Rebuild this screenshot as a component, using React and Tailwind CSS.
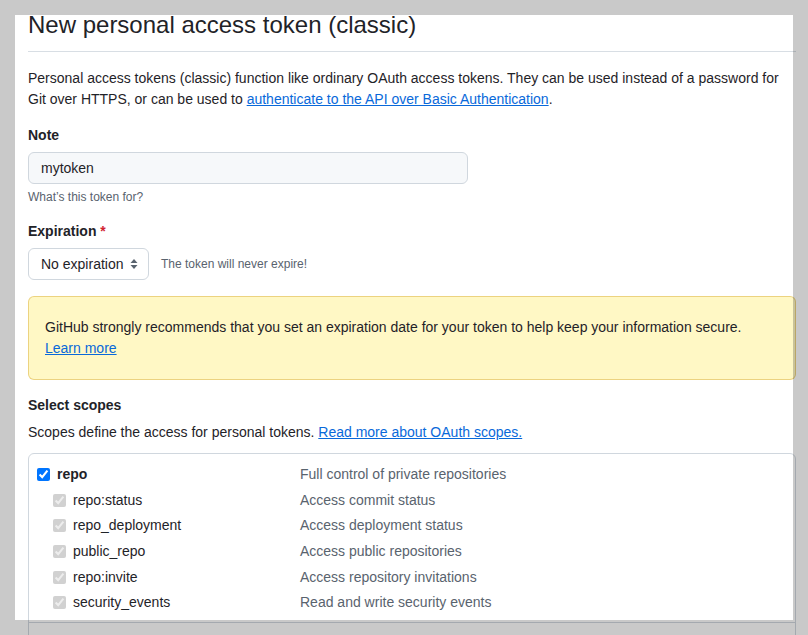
import React from "react";

const rows = [
  { name: "repo", desc: "Full control of private repositories", main: true },
  { name: "repo:status", desc: "Access commit status" },
  { name: "repo_deployment", desc: "Access deployment status" },
  { name: "public_repo", desc: "Access public repositories" },
  { name: "repo:invite", desc: "Access repository invitations" },
  { name: "security_events", desc: "Read and write security events" },
];

export default function App() {
  return (
    <div className="relative h-[635px] w-[808px] overflow-hidden bg-white font-['Liberation_Sans',Arial,sans-serif] text-[14px] leading-[21px] text-[#1f2328]">
      <div className="ml-[28px] w-[768px] pt-[7px]">
        <div className="border-b border-[#d8dee4] pb-[8px]">
          <h1 className="text-[24px] leading-[36px] font-normal">New personal access token (classic)</h1>
        </div>
        <p className="mt-[16px]">
          Personal access tokens (classic) function like ordinary OAuth access tokens. They can be used instead of a password for Git over HTTPS, or can be used to{" "}
          <a className="text-[#0969da] underline">authenticate to the API over Basic Authentication</a>.
        </p>

        <div className="mt-[15px] font-bold">Note</div>
        <div className="mt-[6px] flex h-[32px] w-[440px] items-center rounded-[6px] border border-[#d0d7de] bg-[#f6f8fa] px-[12px]">
          mytoken
        </div>
        <div className="mt-[4px] text-[12px] leading-[18px] text-[#59636e]">What’s this token for?</div>

        <div className="mt-[15px] font-bold">
          Expiration <span className="text-[#d1242f]">*</span>
        </div>
        <div className="mt-[6px] flex items-center gap-[12px]">
          <div className="flex h-[32px] w-[121px] items-center justify-between rounded-[6px] border border-[#d0d7de] bg-white pl-[12px] pr-[10px]">
            <span>No expiration</span>
            <svg width="8" height="12" viewBox="0 0 8 12">
              <path d="M4 1 L7.5 5 H0.5 Z" fill="#59636e" />
              <path d="M4 11 L7.5 7 H0.5 Z" fill="#59636e" />
            </svg>
          </div>
          <span className="text-[12px] leading-[18px] text-[#59636e]">The token will never expire!</span>
        </div>

        <div className="mt-[16px] rounded-[6px] border border-[rgba(212,167,44,0.45)] bg-[#fff8c5] px-[16px] py-[20px]">
          GitHub strongly recommends that you set an expiration date for your token to help keep your information secure.
          <br />
          <a className="text-[#0969da] underline">Learn more</a>
        </div>

        <div className="mt-[15px] font-bold">Select scopes</div>
        <div className="mt-[6px]">
          Scopes define the access for personal tokens.{" "}
          <a className="text-[#0969da] underline">Read more about OAuth scopes.</a>
        </div>

        <div className="mt-[10px] rounded-[6px] border border-[#d0d7de]">
          <div className="border-b border-[#d0d7de] pt-[8px] pb-[6px]">
            {rows.map((r) => (
              <div key={r.name} className="flex h-[25.6px] items-center">
                <div className={`flex w-[271px] items-center ${r.main ? "pl-[8px]" : "pl-[24px]"}`}>
                  <input
                    type="checkbox"
                    defaultChecked
                    disabled={!r.main}
                    className="m-0 h-[13px] w-[13px]"
                  />
                  <span className={`ml-[7px] ${r.main ? "font-bold" : ""}`}>{r.name}</span>
                </div>
                <span className="text-[#59636e]">{r.desc}</span>
              </div>
            ))}
          </div>
          <div className="h-[120px]" />
        </div>
      </div>

      <div className="pointer-events-none absolute left-[15px] top-[15px] h-[605px] w-[778px] shadow-[0_0_0_2000px_rgba(0,0,0,0.21)]" />
    </div>
  );
}
